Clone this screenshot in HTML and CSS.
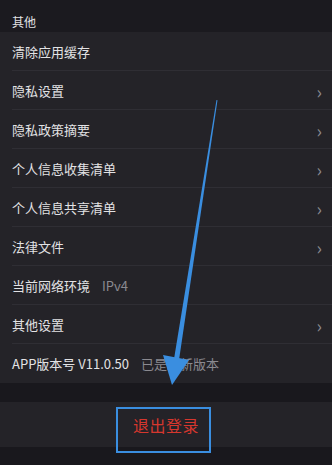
FILE: index.html
```html
<!DOCTYPE html>
<html lang="zh-CN">
<head>
    <meta charset="UTF-8">
    <meta name="viewport" content="width=device-width, initial-scale=1.0">
    <title>其他</title>
    <link rel="stylesheet" href="styles.css">
</head>
<body>
    <div class="section-title">其他</div>

    <div class="list">
        <div class="row"><span class="label">清除应用缓存</span></div>
        <div class="row"><span class="label">隐私设置</span><span class="chevron">&#x203A;</span></div>
        <div class="row"><span class="label">隐私政策摘要</span><span class="chevron">&#x203A;</span></div>
        <div class="row"><span class="label">个人信息收集清单</span><span class="chevron">&#x203A;</span></div>
        <div class="row"><span class="label">个人信息共享清单</span><span class="chevron">&#x203A;</span></div>
        <div class="row"><span class="label">法律文件</span><span class="chevron">&#x203A;</span></div>
        <div class="row"><span class="label">当前网络环境</span><span class="value">IPv4</span></div>
        <div class="row"><span class="label">其他设置</span><span class="chevron">&#x203A;</span></div>
        <div class="row last"><span class="label">APP版本号 V11.0.50</span><span class="value">已是最新版本</span></div>
    </div>

    <div class="logout">
        <span class="logout-text">退出登录</span>
    </div>

    <!-- annotation overlay -->
    <div class="highlight"></div>
    <svg class="arrow" width="332" height="465" viewBox="0 0 332 465">
        <polygon points="216.5,100 217.5,100.3 179,360 174,359" fill="#3a8ee0"/>
        <polygon points="163,355 189,360 172,385" fill="#3a8ee0"/>
    </svg>
</body>
</html>
```

FILE: styles.css
```css
body {
    margin: 0;
    padding: 0;
    background-color: #19181d;
    color: #e2e2e4;
    font-family: "Noto Sans CJK SC", "Noto Sans", sans-serif;
    width: 332px;
    height: 465px;
    overflow: hidden;
    position: relative;
}

.section-title {
    height: 32px;
    box-sizing: border-box;
    padding: 13px 12px 0;
    font-size: 12px;
    line-height: 18px;
    background-color: #1b1a1f;
}

.list {
    background-color: #242328;
}

.row {
    height: 39px;
    display: flex;
    align-items: center;
    padding: 0 10px 0 12px;
    position: relative;
    font-size: 13px;
}

.row::after {
    content: "";
    position: absolute;
    left: 12px;
    right: 0;
    bottom: 0;
    height: 1px;
    background-color: #2f2e34;
}

.row.last::after {
    display: none;
}

.label {
    flex: none;
}

.value {
    margin-left: 12px;
    color: #8b8a90;
}

.chevron {
    margin-left: auto;
    color: #8b8a90;
    font-size: 18px;
    line-height: 18px;
}

.logout {
    margin-top: 19px;
    height: 45px;
    background-color: #242328;
    display: flex;
    align-items: center;
    justify-content: center;
}

.logout-text {
    color: #d6372e;
    font-size: 16px;
    letter-spacing: 0.5px;
}

.highlight {
    position: absolute;
    left: 116px;
    top: 407px;
    width: 95px;
    height: 46px;
    box-sizing: border-box;
    border: 2px solid #3a8ee0;
}

.arrow {
    position: absolute;
    left: 0;
    top: 0;
}
```
